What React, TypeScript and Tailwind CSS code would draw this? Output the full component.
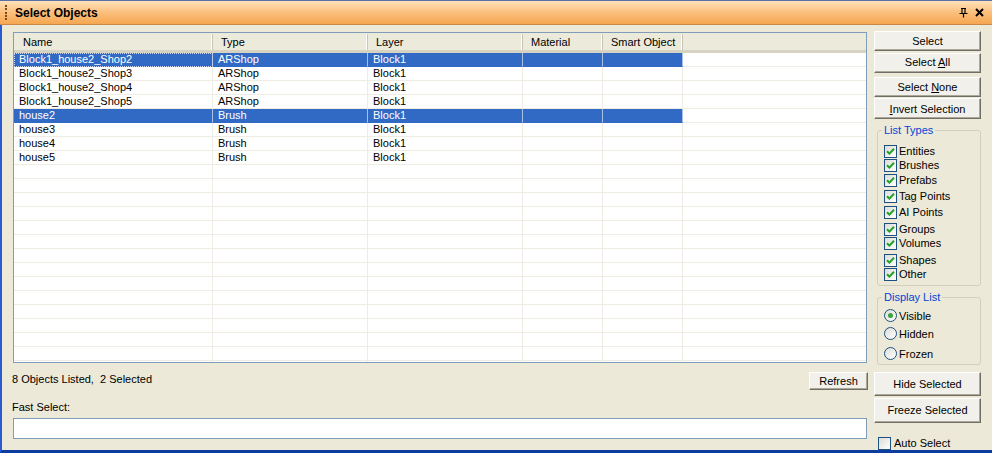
import React from "react";

const FONT = { fontFamily: '"Liberation Sans", Arial, sans-serif' };

type Row = { name: string; type: string; layer: string; selected?: boolean; focus?: boolean };

const rows: Row[] = [
  { name: "Block1_house2_Shop2", type: "ARShop", layer: "Block1", selected: true, focus: true },
  { name: "Block1_house2_Shop3", type: "ARShop", layer: "Block1" },
  { name: "Block1_house2_Shop4", type: "ARShop", layer: "Block1" },
  { name: "Block1_house2_Shop5", type: "ARShop", layer: "Block1" },
  { name: "house2", type: "Brush", layer: "Block1", selected: true },
  { name: "house3", type: "Brush", layer: "Block1" },
  { name: "house4", type: "Brush", layer: "Block1" },
  { name: "house5", type: "Brush", layer: "Block1" },
];

const listTypes = [
  { label: "Entities", mt: "mt-[14px]" },
  { label: "Brushes", mt: "mt-[1px]" },
  { label: "Prefabs", mt: "mt-[2px]" },
  { label: "Tag Points", mt: "mt-[3px]" },
  { label: "AI Points", mt: "mt-[3px]" },
  { label: "Groups", mt: "mt-[4px]" },
  { label: "Volumes", mt: "mt-[1px]" },
  { label: "Shapes", mt: "mt-[4px]" },
  { label: "Other", mt: "mt-[1px]" },
];

function XpButton({ children, className = "" }: { children: React.ReactNode; className?: string }) {
  return (
    <div
      className={`flex items-center justify-center border border-t-white border-l-white border-b-[#716F64] border-r-[#716F64] bg-[#F1F0EA] text-[11px] text-black shadow-[inset_-1px_-1px_0_#ACA899] ${className}`}
    >
      {children}
    </div>
  );
}

function Check({ checked = true }: { checked?: boolean }) {
  return (
    <div className="w-[13px] h-[13px] border border-[#1C5180] bg-gradient-to-br from-[#DCDCD7] to-white flex items-center justify-center shrink-0">
      {checked && (
        <svg width="9" height="9" viewBox="0 0 9 9">
          <path d="M1 4.2 L3.4 6.6 L8 1.8" stroke="#21A121" strokeWidth="2" fill="none" />
        </svg>
      )}
    </div>
  );
}

function Radio({ checked = false }: { checked?: boolean }) {
  return (
    <div className="w-[13px] h-[13px] rounded-full border border-[#1C5180] bg-gradient-to-br from-[#DCDCD7] to-white flex items-center justify-center shrink-0">
      {checked && <div className="w-[5px] h-[5px] rounded-full bg-[#3DA33D]" />}
    </div>
  );
}

function Cell({ children, sel, className = "" }: { children?: React.ReactNode; sel?: boolean; className?: string }) {
  return (
    <div
      className={`h-[14px] leading-[13px] border-b border-r border-[#EFEDE3] pl-[5px] overflow-hidden whitespace-nowrap ${
        sel ? "bg-[#316AC5] text-white border-r-[#A9C1E9] border-b-[#316AC5]" : "text-black"
      } ${className}`}
    >
      {children}
    </div>
  );
}

export default function App() {
  const allRows: (Row | null)[] = [...rows, ...Array.from({ length: 16 }, () => null)];

  return (
    <div className="w-[992px] h-[453px] bg-[#ECE9D8] flex flex-col overflow-hidden text-[11px]" style={FONT}>
      {/* Title bar */}
      <div className="h-[25px] flex items-center bg-gradient-to-b from-[#FFE2BA] via-[#FBBF7C] to-[#F6A650] border-t border-[#5A6FA8] border-b border-b-[#C9874A] shrink-0">
        <div className="ml-[5px] w-[2px] h-[15px] flex flex-col justify-between">
          {Array.from({ length: 5 }).map((_, i) => (
            <div key={i} className="w-[2px] h-[2px] bg-[#7A4B1A]" />
          ))}
        </div>
        <div className="ml-[8px] font-bold text-[12px] text-black">Select Objects</div>
        <div className="ml-auto mr-[8px] flex items-center gap-[7px]">
          <svg width="9" height="10" viewBox="0 0 9 10">
            <path d="M2 0.5 H7 M3 0.5 V5.5 M6 0.5 V5.5 M0.5 5.5 H8.5 M4.5 5.5 V9.5" stroke="#000" strokeWidth="1.2" fill="none" />
          </svg>
          <svg width="9" height="9" viewBox="0 0 9 9">
            <path d="M1 1 L8 8 M8 1 L1 8" stroke="#000" strokeWidth="2" />
          </svg>
        </div>
      </div>

      {/* Body */}
      <div className="flex-1 flex border-l-2 border-l-[#2A5AD0] border-b-[3px] border-b-[#0C3C9E] min-h-0">
        {/* Left column */}
        <div className="flex flex-col pl-[11px] pt-[7px] w-[865px]">
          {/* Table */}
          <div className="h-[331px] border border-[#7F9DB9] bg-white overflow-hidden">
            <div className="grid grid-cols-[199px_155px_155px_80px_80px_1fr] h-[20px] bg-[#EBEADB] border-b-[3px] border-b-[#D6D3C2]">
              {["Name", "Type", "Layer", "Material", "Smart Object", ""].map((h, i) => (
                <div
                  key={i}
                  className={`flex items-center text-black ${i === 0 ? "pl-[9px]" : "pl-[8px]"} ${
                    i < 5 ? "border-r border-r-[#C7C5B2] shadow-[inset_-1px_0_0_#FFFFFF]" : ""
                  } h-[16px] mt-[1px]`}
                >
                  {h}
                </div>
              ))}
            </div>
            {allRows.map((r, idx) => (
              <div key={idx} className="grid grid-cols-[199px_155px_155px_80px_80px_1fr]">
                <Cell sel={r?.selected} className={r?.focus ? "outline-1 outline-dotted outline-[#C9D6EE] -outline-offset-1" : ""}>
                  {r?.name}
                </Cell>
                <Cell sel={r?.selected}>{r?.type}</Cell>
                <Cell sel={r?.selected}>{r?.layer}</Cell>
                <Cell sel={r?.selected} />
                <Cell sel={r?.selected} />
                <Cell className="border-r-0" />
              </div>
            ))}
          </div>

          {/* Status row */}
          <div className="flex items-start mt-[9px] h-[18px]">
            <div className="text-black -ml-[1px] leading-[14px]">8 Objects Listed,&nbsp; 2 Selected</div>
            <XpButton className="ml-auto w-[59px] h-[18px] -mr-[1px]">Refresh</XpButton>
          </div>

          <div className="mt-[10px] text-black -ml-[1px] leading-[14px]">Fast Select:</div>
          <div className="mt-[4px] h-[21px] border border-[#7F9DB9] bg-white" />
        </div>

        {/* Right column */}
        <div className="flex flex-col pl-[7px] pt-[6px] w-[116px]">
          <XpButton className="w-[107px] h-[20px]">Select</XpButton>
          <XpButton className="w-[107px] h-[20px] mt-[2px]">
            <span>
              Select <u>A</u>ll
            </span>
          </XpButton>
          <XpButton className="w-[107px] h-[21px] mt-[4px]">
            <span>
              Select <u>N</u>one
            </span>
          </XpButton>
          <XpButton className="w-[107px] h-[21px] mt-[1px]">
            <span>
              <u>I</u>nvert Selection
            </span>
          </XpButton>

          {/* List Types */}
          <div className="relative mt-[11px] ml-[3px] w-[104px] h-[158px] border border-[#D0D0BF] rounded-[3px] pl-[6px]">
            <div className="absolute -top-[8px] left-[4px] px-[2px] bg-[#ECE9D8] text-[#0046D5] leading-[14px]">List Types</div>
            {listTypes.map((t) => (
              <div key={t.label} className={`flex items-center gap-[2px] h-[13px] ${t.mt}`}>
                <Check />
                <span className="text-black">{t.label}</span>
              </div>
            ))}
          </div>

          {/* Display List */}
          <div className="relative mt-[11px] ml-[3px] w-[104px] h-[68px] border border-[#D0D0BF] rounded-[3px] pl-[6px]">
            <div className="absolute -top-[8px] left-[4px] px-[2px] bg-[#ECE9D8] text-[#0046D5] leading-[14px]">Display List</div>
            <div className="flex items-center gap-[2px] h-[13px] mt-[11px]">
              <Radio checked />
              <span>Visible</span>
            </div>
            <div className="flex items-center gap-[2px] h-[13px] mt-[5px]">
              <Radio />
              <span>Hidden</span>
            </div>
            <div className="flex items-center gap-[2px] h-[13px] mt-[7px]">
              <Radio />
              <span>Frozen</span>
            </div>
          </div>

          <XpButton className="w-[107px] h-[25px] mt-[7px]">Hide Selected</XpButton>
          <XpButton className="w-[107px] h-[25px] mt-[2px]">Freeze Selected</XpButton>

          <div className="flex items-center gap-[3px] mt-[14px] ml-[4px] h-[13px]">
            <Check checked={false} />
            <span>Auto Select</span>
          </div>
        </div>
      </div>
    </div>
  );
}
